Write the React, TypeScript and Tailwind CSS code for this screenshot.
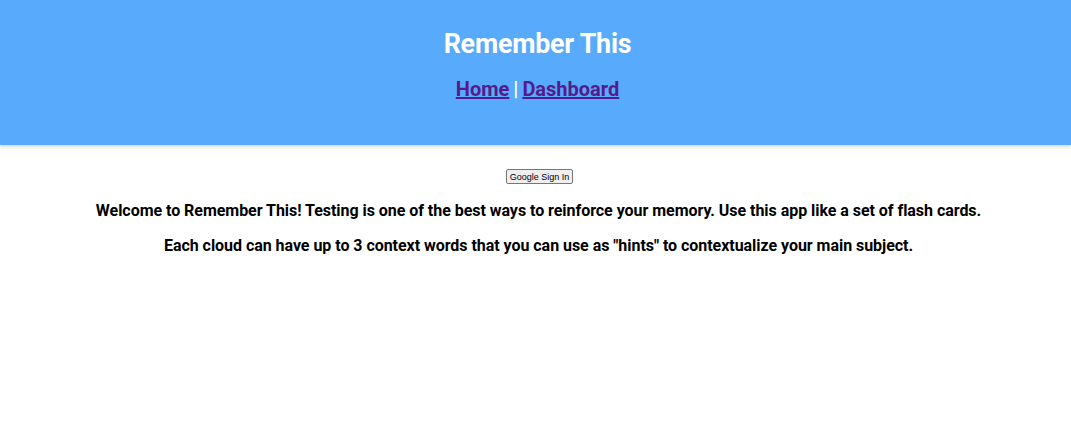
export default function App() {
  return (
    <div className="min-h-screen bg-white font-['Roboto',sans-serif] text-black">
      <header className="bg-[#58aafd] h-[145px] shadow-[0_2px_3px_rgba(0,0,0,0.15)] flex flex-col items-center pt-[28px]">
        <h1 className="ml-[4px] text-[26.8px] font-bold text-white leading-[32px] tracking-[-0.2px]">Remember This</h1>
        <nav className="ml-[4px] mt-[16px] text-[20px] font-bold text-white leading-[26px]">
          <a href="#" className="text-[#551a8b] underline">Home</a>
          <span className="mx-[4px]">|</span>
          <a href="#" className="text-[#551a8b] underline">Dashboard</a>
        </nav>
      </header>
      <main className="flex flex-col items-center pt-[24px]">
        <button className="ml-[8px] font-['Liberation_Sans',Arial,sans-serif] text-[9px] leading-[12px] h-[15px] bg-[#efefef] border border-[#767676] rounded-[2px] px-[3px] text-black">
          Google Sign In
        </button>
        <p className="ml-[6px] mt-[17px] text-[16px] font-bold leading-[20px] text-center tracking-[-0.04px]">
          Welcome to Remember This! Testing is one of the best ways to reinforce your memory. Use this app like a set of flash cards.
        </p>
        <p className="ml-[6px] mt-[15px] text-[16px] font-bold leading-[20px] text-center tracking-[-0.04px]">
          Each cloud can have up to 3 context words that you can use as "hints" to contextualize your main subject.
        </p>
      </main>
    </div>
  );
}
